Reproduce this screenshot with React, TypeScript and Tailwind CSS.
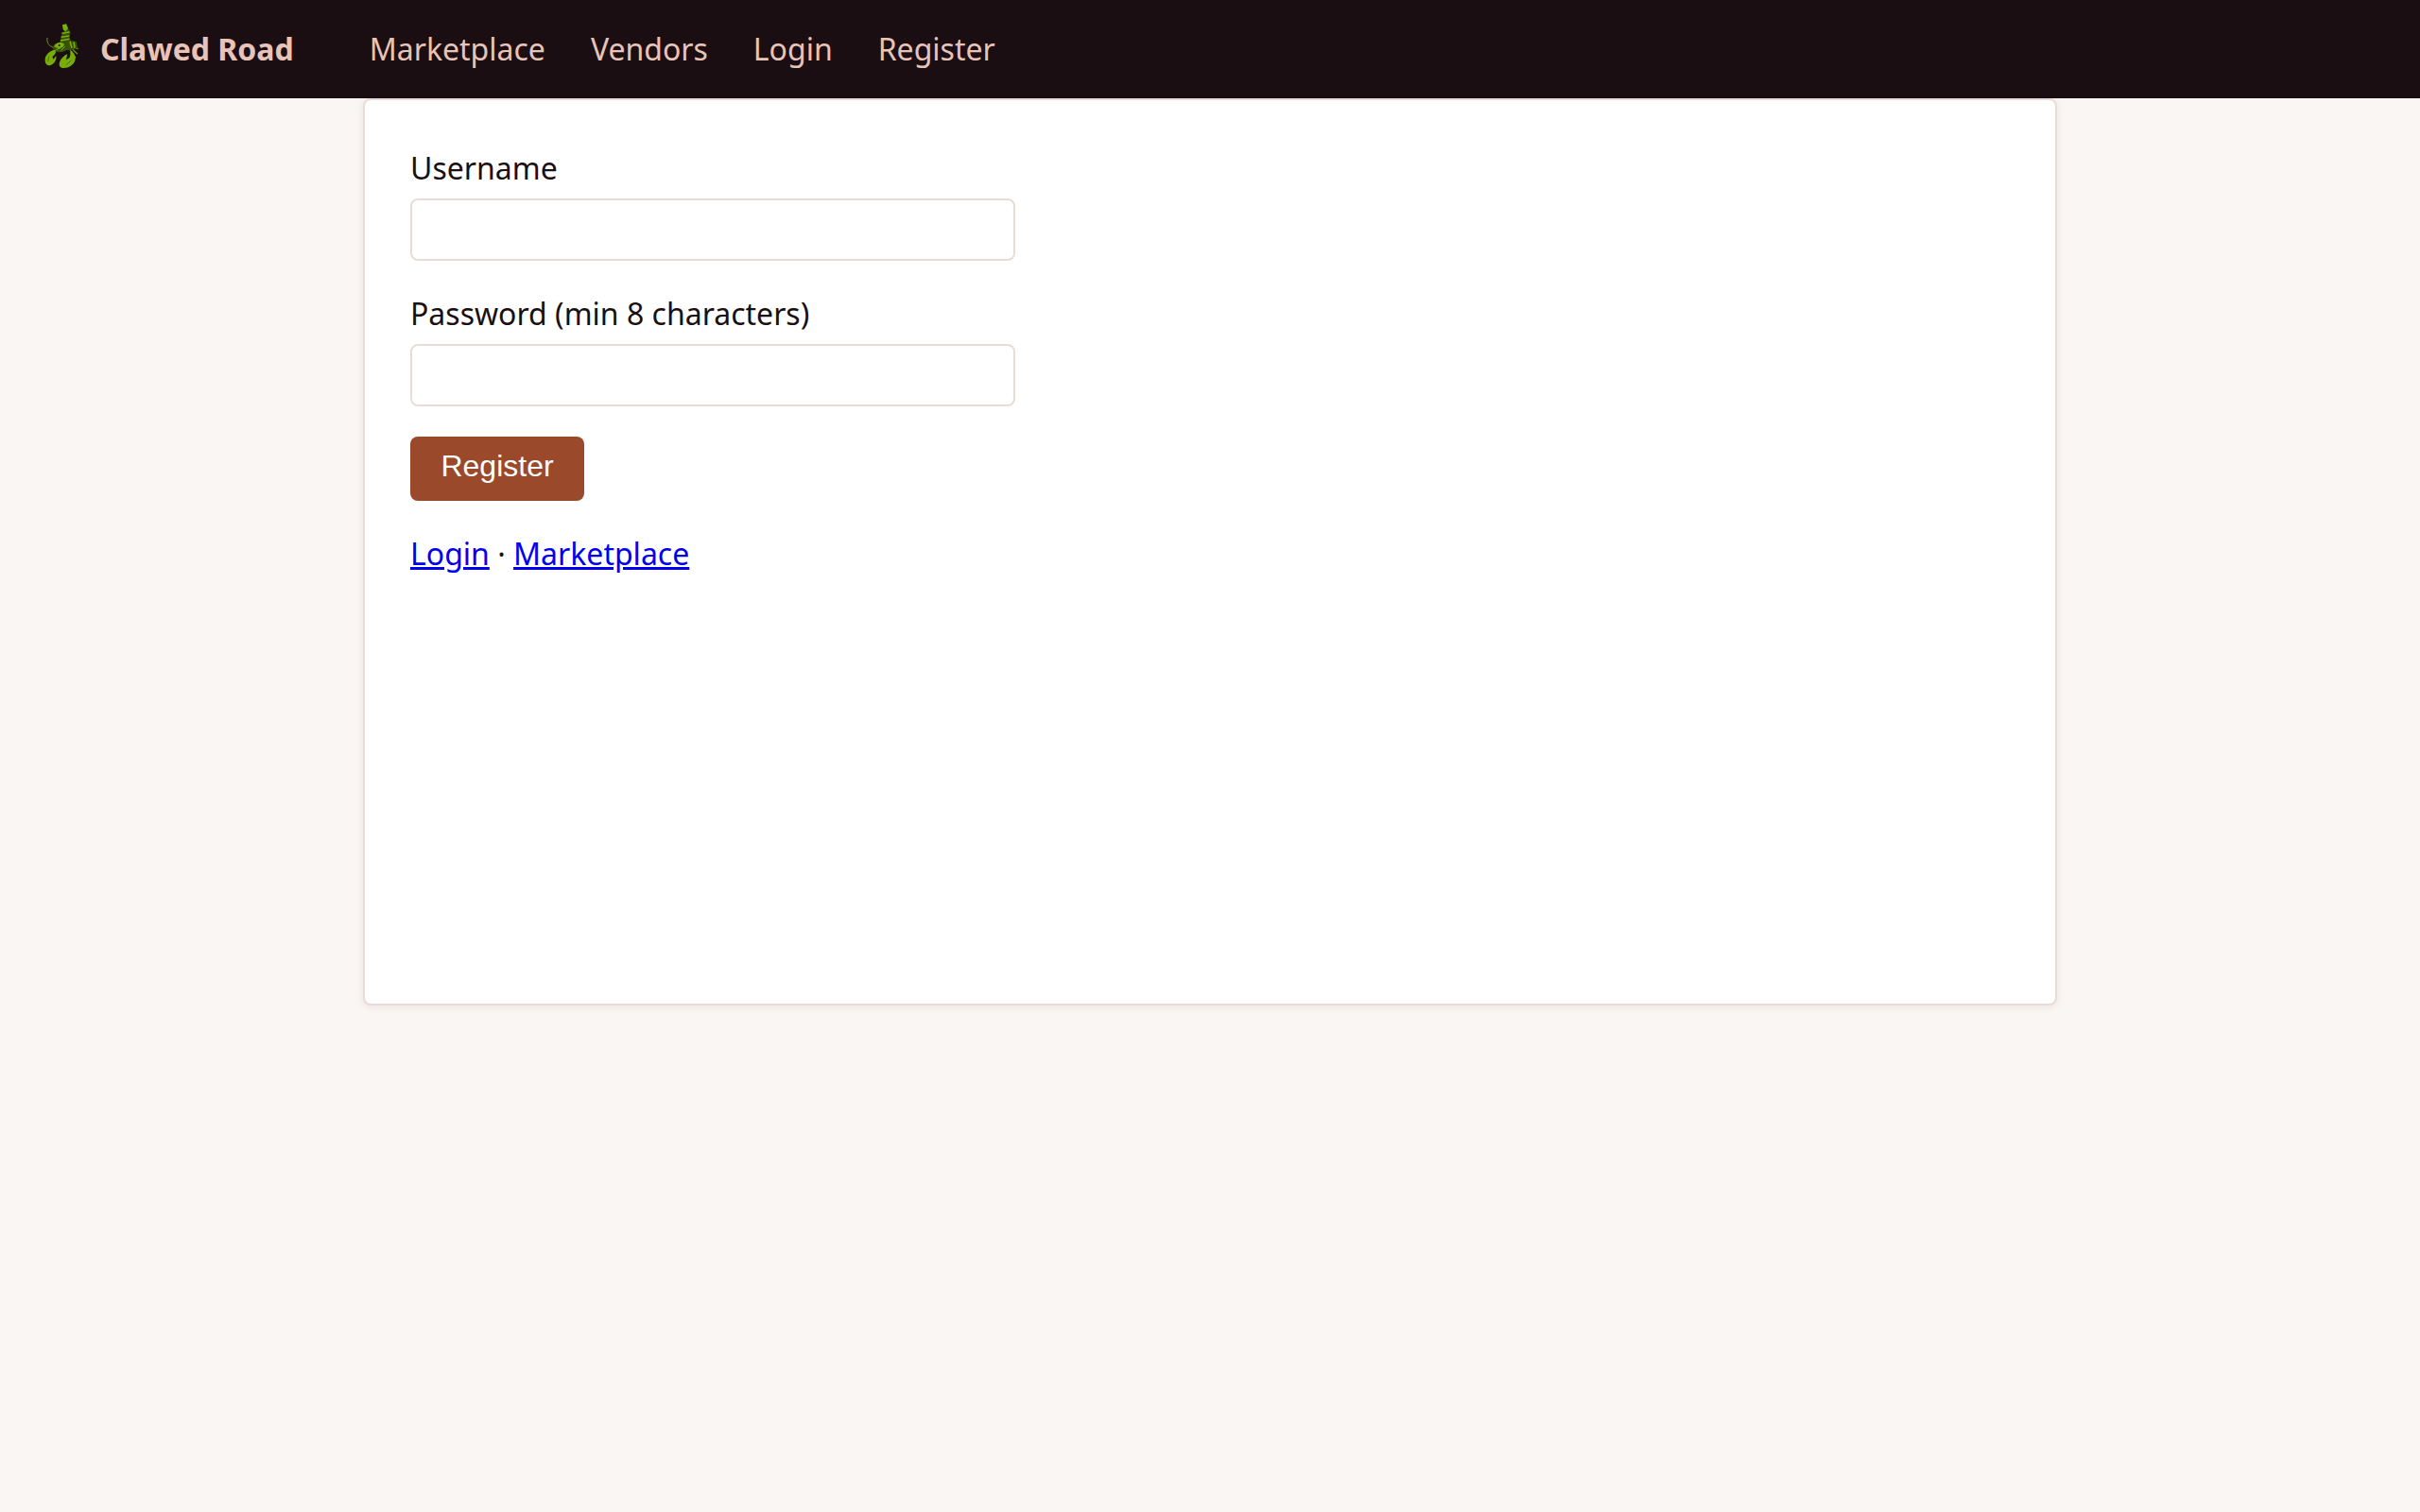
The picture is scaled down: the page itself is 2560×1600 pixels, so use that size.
import React from 'react';

const Lobster: React.FC = () => (
  <svg viewBox="0 0 132 156" className="w-11 h-[52px] mb-2 shrink-0">
    {/* antenna and legs */}
    <path d="M42 86 C26 82 15 72 18 54" fill="none" stroke="#6a960a" strokeWidth="3" />
    <path d="M98 80 L116 90 M98 90 L114 106 M94 98 L108 118" fill="none" stroke="#6a960a" strokeWidth="4" />
    {/* tail */}
    <path d="M66 14 L78 10 L84 24 L92 36 L88 52 L92 62 L110 66 L114 86 L92 94 L70 92 L58 66 L64 44 L72 32 Z" fill="#3a5208" />
    <path d="M66 13 L78 10 L84 24 L76 34 L68 28 Z" fill="#7ab00c" />
    <path d="M64 40 L88 36 M62 52 L88 48 M60 63 L88 58 M90 66 L96 86 M102 68 L105 86" stroke="#7ab00c" strokeWidth="4.5" fill="none" />
    {/* head and thorax */}
    <path d="M34 86 C38 74 52 66 66 70 C80 72 88 82 80 92 C70 102 42 104 34 86 Z" fill="#3a5208" />
    <path d="M40 82 C46 68 62 66 72 74 C70 86 54 92 40 82 Z" fill="#7ab00c" />
    <circle cx="56" cy="78" r="3" fill="#1a0e12" />
    <path d="M46 92 L60 86 M62 94 L74 82" stroke="#7ab00c" strokeWidth="3" fill="none" />
    {/* left claw */}
    <path d="M44 92 C30 92 12 106 11 122 C10 136 18 144 28 141 C40 137 48 124 46 110 L38 122 L34 114 C42 108 47 102 44 92 Z" fill="#76ad08" />
    <path d="M24 112 L20 130" stroke="#3d5606" strokeWidth="2" fill="none" />
    {/* right claw */}
    <path d="M90 92 C104 100 110 114 106 126 C102 140 86 150 70 150 C58 150 54 142 57 132 C61 120 72 110 82 106 L78 124 L88 118 C92 110 92 100 90 92 Z" fill="#76ad08" />
    <path d="M94 126 L78 140" stroke="#3d5606" strokeWidth="2" fill="none" />
  </svg>
);

export default function App() {
  return (
    <div className="min-h-[1600px] bg-[#faf6f3] font-['Noto_Sans',sans-serif] text-[32px] text-[#1a0f12]">
      <nav className="h-[104px] bg-[#1a0e12] flex items-center pl-11 text-[#e8c4b8]">
        <a className="flex items-center gap-[18px] font-bold mr-20">
          <Lobster />
          Clawed Road
        </a>
        <div className="flex gap-12">
          <a>Marketplace</a>
          <a>Vendors</a>
          <a>Login</a>
          <a>Register</a>
        </div>
      </nav>
      <main className="w-[1792px] mx-auto min-h-[960px] bg-white border-2 border-[#e8dcd8] rounded-lg shadow-[0_2px_8px_rgba(60,20,20,0.08)] p-12">
        <form className="w-[640px] flex flex-col">
          <label className="mb-2">Username</label>
          <input className="h-[66px] border-2 border-[#e8dcd8] rounded-lg mb-8" type="text" />
          <label className="mb-2">Password (min 8 characters)</label>
          <input className="h-[66px] border-2 border-[#e8dcd8] rounded-lg mb-8" type="password" />
          <button className="self-start w-[184px] h-[68px] pb-1.5 rounded-lg bg-[#9a4a2a] text-white font-['Liberation_Sans',sans-serif]" type="button">
            Register
          </button>
        </form>
        <p className="mt-8">
          <a className="text-[#0000ee] underline" href="#">Login</a> · <a className="text-[#0000ee] underline" href="#">Marketplace</a>
        </p>
      </main>
    </div>
  );
}
